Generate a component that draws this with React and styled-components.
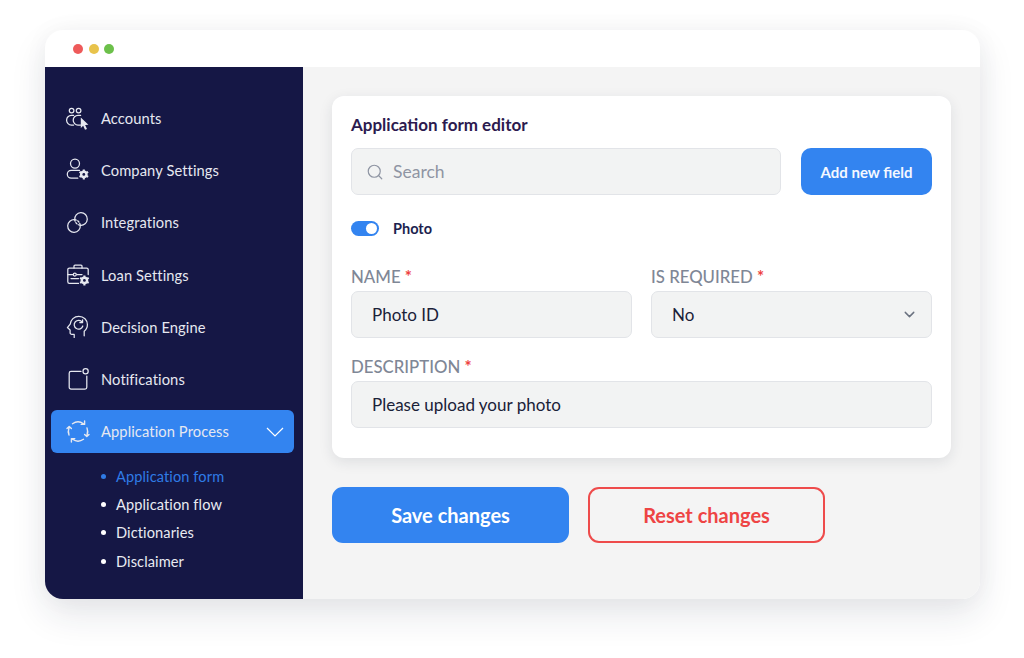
import React from 'react';
import styled, { createGlobalStyle } from 'styled-components';
import { ChevronDown, Search } from 'lucide-react';

const GlobalStyle = createGlobalStyle`
  html, body {
    margin: 0;
    padding: 0;
    background: #fff;
  }
  * {
    box-sizing: border-box;
  }
`;

const Page = styled.div`
  width: 1024px;
  height: 658px;
  padding: 30px 44px 59px 45px;
  font-family: 'Lato', 'Open Sans', sans-serif;
  overflow: hidden;
`;

const WindowShadow = styled.div`
  height: 100%;
  border-radius: 18px;
  box-shadow: 0 16px 36px rgba(30, 35, 60, 0.11), 0 0 26px rgba(30, 35, 60, 0.04);
`;

const Window = styled.div`
  height: 100%;
  display: flex;
  flex-direction: column;
  border-radius: 18px;
  overflow: hidden;
  background: #f4f4f4;
`;

const TitleBar = styled.div`
  flex: 0 0 37px;
  display: flex;
  align-items: center;
  gap: 5.5px;
  padding-left: 28px;
  background: #fff;
`;

const Dot = styled.span`
  width: 10px;
  height: 10px;
  border-radius: 50%;
  background: ${(p) => p.$color};
`;

const Body = styled.div`
  flex: 1;
  display: flex;
  min-height: 0;
`;

const Sidebar = styled.nav`
  flex: 0 0 258px;
  display: flex;
  flex-direction: column;
  padding: 30px 9px 0 6px;
  background: #151745;
`;

const NavList = styled.div`
  display: flex;
  flex-direction: column;
  gap: 9.2px;
`;

const NavItem = styled.div`
  height: 43px;
  display: flex;
  align-items: center;
  gap: 10px;
  padding: 0 10px 0 15px;
  border-radius: 6px;
  color: #e6e8f0;
  font-size: 14.7px;
  letter-spacing: 0.1px;
  background: ${(p) => (p.$active ? '#3384f0' : 'transparent')};
`;

const NavIcon = styled.svg`
  flex: 0 0 25px;
  width: 25px;
  height: 25px;
  fill: none;
  stroke: currentColor;
  stroke-width: 1.25;
  stroke-linecap: round;
  stroke-linejoin: round;
`;

const NavLabel = styled.span`
  flex: 1;
  padding-bottom: 1px;
`;

const SelectValue = styled.span`
  flex: 1;
`;

const SubList = styled.ul`
  list-style: none;
  margin: 12px 0 0;
  padding: 0 0 0 50px;
  display: flex;
  flex-direction: column;
  gap: 6.4px;
`;

const SubItem = styled.li`
  height: 22px;
  display: flex;
  align-items: center;
  gap: 10px;
  font-size: 14.6px;
  letter-spacing: 0.1px;
  color: ${(p) => (p.$active ? '#2f7be6' : '#e9ebf2')};

  &::before {
    content: '';
    width: 5px;
    height: 5px;
    border-radius: 50%;
    background: ${(p) => (p.$active ? '#2f7be6' : '#fff')};
  }
`;

const Main = styled.main`
  flex: 1;
  display: flex;
  flex-direction: column;
  gap: 29px;
  padding: 29px 29px 0 29px;
`;

const Card = styled.section`
  height: 362px;
  display: flex;
  flex-direction: column;
  padding: 17px 19px 0;
  border-radius: 12px;
  background: #fff;
  box-shadow: 0 4px 14px rgba(30, 35, 60, 0.1);
`;

const CardTitle = styled.h2`
  margin: 0;
  height: 22px;
  line-height: 24px;
  font-size: 17px;
  font-weight: 700;
  color: #2c1a4f;
`;

const SearchRow = styled.div`
  display: flex;
  gap: 20px;
  margin-top: 13px;
`;

const Field = styled.div`
  flex: 0 0 47px;
  display: flex;
  align-items: center;
  min-width: 0;
  padding: 0 ${(p) => (p.$select ? '13px' : '20px')} 0 20px;
  border: 1.5px solid #e2e4e8;
  border-radius: 7px;
  background: #f2f3f3;
  color: #1a2138;
  font-size: 17px;
`;

const SearchField = styled(Field)`
  flex: 1;
  height: 47px;
  padding-left: 14px;
  gap: 9px;
  color: #8f95a3;
  font-size: 17.5px;
`;

const SmallButton = styled.button`
  flex: 0 0 131px;
  height: 47px;
  border: none;
  border-radius: 10px;
  background: #3384f0;
  color: #f4f8ff;
  font-family: inherit;
  font-size: 15px;
  font-weight: 700;
`;

const ToggleRow = styled.div`
  display: flex;
  align-items: center;
  gap: 14px;
  margin-top: 26px;
  height: 15px;
`;

const Toggle = styled.span`
  width: 28px;
  height: 15px;
  display: flex;
  justify-content: flex-end;
  align-items: center;
  padding: 0 2px;
  border-radius: 8px;
  background: #3384f0;

  &::after {
    content: '';
    width: 11px;
    height: 11px;
    border-radius: 50%;
    background: #fff;
  }
`;

const ToggleLabel = styled.span`
  font-size: 14.5px;
  font-weight: 700;
  color: #1d1f4f;
`;

const FieldGrid = styled.div`
  display: grid;
  grid-template-columns: 281px 281px;
  column-gap: 19px;
  margin-top: 29px;
`;

const FieldBlock = styled.div`
  grid-column: ${(p) => (p.$wide ? '1 / -1' : 'auto')};
  display: flex;
  flex-direction: column;
  margin-top: ${(p) => (p.$wide ? '17px' : '0')};
`;

const Label = styled.label`
  height: 22px;
  margin-bottom: 4px;
  line-height: 24px;
  font-size: 16.8px;
  font-weight: 500;
  color: #7f8796;
`;

const Star = styled.span`
  color: #ee3f3f;
  font-weight: 700;
`;

const Actions = styled.div`
  display: flex;
  gap: 19px;
`;

const BigButton = styled.button`
  width: 237px;
  height: 56px;
  border-radius: 11px;
  border: 2px solid ${(p) => (p.$outline ? '#ee4b4b' : '#3384f0')};
  background: ${(p) => (p.$outline ? 'transparent' : '#3384f0')};
  color: ${(p) => (p.$outline ? '#ee4444' : '#fff')};
  font-family: inherit;
  font-size: 20px;
  font-weight: 700;
`;

const Gear = ({ x, y }) => (
  <g transform={`translate(${x} ${y})`}>
    <circle r="3.8" fill="currentColor" stroke="none" />
    <path d="M0-5V5M-4.3-2.5L4.3 2.5M-4.3 2.5L4.3-2.5" strokeWidth="2.1" strokeLinecap="butt" />
    <circle r="1.4" fill="#151745" stroke="none" />
  </g>
);

const icons = {
  accounts: (
    <>
      <circle cx="5.6" cy="4.6" r="2.3" />
      <circle cx="12.6" cy="4.6" r="2.3" />
      <path d="M7.6 9.4H5.4a4.6 4.6 0 0 0 0 9.6h2.2" />
      <path d="M14.6 9.4h-2.6a4.6 4.6 0 0 0 0 9.6h2.6" />
      <path d="M14.8 11.4l7.6 7.4-3.3.2 1.9 3.9-2 .9-1.8-4-2.4 2.3z" fill="currentColor" stroke="none" />
    </>
  ),
  company: (
    <>
      <circle cx="9" cy="5.6" r="4.5" />
      <path d="M13.5 12.4H5.2a3.9 3.9 0 0 0 0 7.8h6.6" />
      <Gear x="17.8" y="16.4" />
    </>
  ),
  integrations: (
    <>
      <path d="M8.74 9.74A6.3 6.3 0 1 1 14.26 15.26 6.3 6.3 0 1 1 8.74 9.74Z" />
      <path d="M8.74 9.74A6.3 6.3 0 0 1 14.26 15.26" strokeDasharray="1.6 1.5" />
      <path d="M8.74 9.74A6.3 6.3 0 0 0 14.26 15.26" strokeDasharray="1.6 1.5" />
    </>
  ),
  loan: (
    <>
      <path d="M8 5V3a1 1 0 0 1 1-1h6a1 1 0 0 1 1 1v2" />
      <path d="M12.5 20.4H3.4A1.6 1.6 0 0 1 1.8 18.8V6.6A1.6 1.6 0 0 1 3.4 5h17.2a1.6 1.6 0 0 1 1.6 1.6v5" />
      <path d="M1.8 11.6h5M11 11.6h5M5 15.6h7.5" />
      <circle cx="8.8" cy="11.6" r="1.5" />
      <Gear x="18.4" y="17.4" />
    </>
  ),
  decision: (
    <>
      <path d="M8.2 22.4v-3H5.8a1.7 1.7 0 0 1-1.7-1.7v-2.8L1.4 12.6l2.8-3.4C4.6 4.8 8.2 1.4 12.8 1.4c5 0 8.6 3.6 8.6 8.2 0 3-1.2 5.2-3.2 6.7v4.5" />
      <path d="M16.2 7.2a4.4 4.4 0 1 0 .6 3.8" />
      <path d="M16.6 4.8v2.8h-2.8" />
    </>
  ),
  notifications: (
    <>
      <path d="M15 4.4H5a1.8 1.8 0 0 0-1.8 1.8v14a1.8 1.8 0 0 0 1.8 1.8h14a1.8 1.8 0 0 0 1.8-1.8V9" />
      <circle cx="19.6" cy="4.2" r="2.6" />
    </>
  ),
  process: (
    <>
      <path d="M6.5 4.7a9.5 9.5 0 0 1 11 0M18.6 2v3.4h-3.4" strokeWidth="1.4" />
      <path d="M21 9a9.5 9.5 0 0 1 0 7M18.6 15.4l2.2 2.2 2.2-2.2" strokeWidth="1.4" />
      <path d="M17.5 20.3a9.5 9.5 0 0 1-11 0M5.4 23v-3.4h3.4" strokeWidth="1.4" />
      <path d="M3 16a9.5 9.5 0 0 1 0-7M1 9.6l2.2-2.2 2.2 2.2" strokeWidth="1.4" />
    </>
  ),
};

const navItems = [
  { key: 'accounts', label: 'Accounts' },
  { key: 'company', label: 'Company Settings' },
  { key: 'integrations', label: 'Integrations' },
  { key: 'loan', label: 'Loan Settings' },
  { key: 'decision', label: 'Decision Engine' },
  { key: 'notifications', label: 'Notifications' },
  { key: 'process', label: 'Application Process', active: true },
];

const subItems = ['Application form', 'Application flow', 'Dictionaries', 'Disclaimer'];

export default function App() {
  return (
    <Page>
      <GlobalStyle />
      <WindowShadow>
        <Window>
          <TitleBar>
            <Dot $color="#ee5a5a" />
            <Dot $color="#e8c34b" />
            <Dot $color="#6cc04a" />
          </TitleBar>
          <Body>
            <Sidebar>
              <NavList>
                {navItems.map((item) => (
                  <NavItem key={item.key} $active={item.active}>
                    <NavIcon viewBox="0 0 25 25">{icons[item.key]}</NavIcon>
                    <NavLabel>{item.label}</NavLabel>
                    {item.active && (
                      <svg width="18" height="10" viewBox="0 0 18 10" fill="none" stroke="#fff" strokeWidth="1.2">
                        <path d="M1 1l8 8 8-8" />
                      </svg>
                    )}
                  </NavItem>
                ))}
              </NavList>
              <SubList>
                {subItems.map((label, i) => (
                  <SubItem key={label} $active={i === 0}>{label}</SubItem>
                ))}
              </SubList>
            </Sidebar>
            <Main>
              <Card>
                <CardTitle>Application form editor</CardTitle>
                <SearchRow>
                  <SearchField>
                    <Search size={18} strokeWidth={1.6} color="#8f95a3" />
                    Search
                  </SearchField>
                  <SmallButton>Add new field</SmallButton>
                </SearchRow>
                <ToggleRow>
                  <Toggle />
                  <ToggleLabel>Photo</ToggleLabel>
                </ToggleRow>
                <FieldGrid>
                  <FieldBlock>
                    <Label>NAME <Star>*</Star></Label>
                    <Field>Photo ID</Field>
                  </FieldBlock>
                  <FieldBlock>
                    <Label>IS REQUIRED <Star>*</Star></Label>
                    <Field $select>
                      <SelectValue>No</SelectValue>
                      <ChevronDown size={17} strokeWidth={2} color="#6b7280" />
                    </Field>
                  </FieldBlock>
                  <FieldBlock $wide>
                    <Label>DESCRIPTION <Star>*</Star></Label>
                    <Field>Please upload your photo</Field>
                  </FieldBlock>
                </FieldGrid>
              </Card>
              <Actions>
                <BigButton>Save changes</BigButton>
                <BigButton $outline>Reset changes</BigButton>
              </Actions>
            </Main>
          </Body>
        </Window>
      </WindowShadow>
    </Page>
  );
}
